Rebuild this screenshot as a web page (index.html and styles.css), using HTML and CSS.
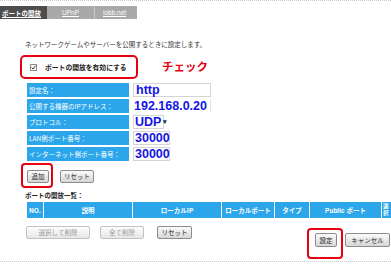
FILE: index.html
```html
<!DOCTYPE html>
<html lang="ja">
<head>
<meta charset="utf-8">
<link rel="stylesheet" href="styles.css">
</head>
<body>
<div class="topline"></div>
<nav class="tabs">
  <a class="tab active">ポートの開放</a>
  <a class="tab upnp">UPnP</a>
  <a class="tab iobb">iobb.net</a>
</nav>
<p class="intro">ネットワークゲームやサーバーを公開するときに設定します。</p>
<div class="enable-row">
  <label class="enable-box"><svg class="cb" width="7" height="7" viewBox="0 0 7 7"><rect x="0.5" y="0.5" width="6" height="6" fill="#fff" stroke="#8a8a8a"/><path d="M1.6 3.5 L3 5 L5.5 1.8" fill="none" stroke="#333" stroke-width="1"/></svg>ポートの開放を有効にする</label>
  <span class="check-note">チェック</span>
</div>
<div class="form">
  <div class="lbl">設定名：</div>
  <div class="val"><span class="input w78">http</span></div>
  <div class="lbl">公開する機器のIPアドレス：</div>
  <div class="val"><span class="input ip">192.168.0.20</span></div>
  <div class="lbl">プロトコル：</div>
  <div class="val"><span class="input sel">UDP<span class="arrow">▾</span></span></div>
  <div class="lbl">LAN側ポート番号：</div>
  <div class="val"><span class="input w37">30000</span></div>
  <div class="lbl">インターネット側ポート番号：</div>
  <div class="val"><span class="input w37">30000</span></div>
</div>
<div class="add-row">
  <div class="hl hl-add"><button class="btn add">追加</button></div>
  <button class="btn reset1">リセット</button>
</div>
<div class="list-title">ポートの開放一覧：</div>
<div class="thead">
  <div class="th c-no">NO.</div>
  <div class="th c-desc">説明</div>
  <div class="th c-ip">ローカルIP</div>
  <div class="th c-lport">ローカルポート</div>
  <div class="th c-type">タイプ</div>
  <div class="th c-pub">Public ポート</div>
  <div class="th c-sel">選<br>択</div>
</div>
<div class="foot">
  <div class="left-btns">
    <button class="btn dis b-delsel">選択して削除</button>
    <button class="btn dis b-delall">全て削除</button>
    <button class="btn b-reset2">リセット</button>
  </div>
  <div class="right-btns">
    <div class="hl hl-set"><button class="btn set">設定</button></div>
    <button class="btn cancel">キャンセル</button>
  </div>
</div>
<div class="bottomline"></div>
</body>
</html>
```

FILE: styles.css
```css
html, body {
  margin: 0;
  padding: 0;
  overflow: hidden;
  background: #fff;
}
body {
  width: 391px;
  height: 268px;
  font-family: "Noto Sans CJK JP", sans-serif;
  font-size: 6.5px;
  color: #333;
}
.topline {
  border-top: 1px dotted #c8c8c8;
}
.tabs {
  display: flex;
  width: 137px;
  height: 13px;
  margin-top: 5px;
  background: #a9a9a9;
}
.tab {
  display: flex;
  align-items: center;
  color: #fff;
  text-decoration: underline;
  font-size: 6.5px;
  box-sizing: border-box;
}
.tab.active {
  background: #4d4d4d;
  width: 47px;
  padding-left: 2px;
  font-weight: bold;
}
.tab.upnp {
  width: 48px;
  padding-left: 15px;
  border-right: 1px solid #c9c9c9;
  font-family: "Liberation Sans", sans-serif;
}
.tab.iobb {
  padding-left: 8px;
  font-family: "Liberation Sans", sans-serif;
}
.intro {
  margin: 20px 0 0;
  padding-left: 25px;
  line-height: 10px;
  color: #333;
}
.enable-row {
  display: flex;
  align-items: center;
  margin-top: 6px;
}
.enable-box {
  margin-left: 20px;
  width: 118px;
  height: 24px;
  box-sizing: border-box;
  border: 2px solid #e60012;
  border-radius: 5px;
  display: flex;
  align-items: center;
  padding-left: 8px;
  font-weight: bold;
  font-size: 6.8px;
  color: #222;
}
.cb {
  margin-right: 8px;
  flex-shrink: 0;
}
.check-note {
  margin-left: 24px;
  color: #e60012;
  font-size: 11.5px;
  font-weight: bold;
  line-height: 1;
}
.form {
  display: grid;
  grid-template-columns: 102px auto;
  column-gap: 4px;
  row-gap: 2px;
  grid-auto-rows: 14px;
  margin-top: 4px;
  padding-left: 27px;
}
.lbl {
  background: #2ba6ea;
  color: #fff;
  display: flex;
  align-items: center;
  padding-left: 2px;
  font-size: 6.5px;
  white-space: nowrap;
}
.val {
  display: flex;
  align-items: center;
  font-family: "Liberation Sans", sans-serif;
  font-size: 12.5px;
  font-weight: bold;
  color: #1414e6;
}
.input {
  display: flex;
  align-items: center;
  height: 14px;
  box-sizing: border-box;
  border: 1px solid #d4d4d4;
  padding-left: 2px;
  line-height: 12px;
}
.w78 { width: 78px; }
.w37 { width: 37px; padding-left: 1px; }
.ip {
  width: 78px;
  padding-left: 0;
  border-color: transparent #e2e2e2 transparent transparent;
}
.sel {
  width: 31px;
  padding-left: 1px;
}
.arrow {
  font-size: 7px;
  color: #333;
  margin-left: 2px;
}
.add-row {
  display: flex;
  align-items: flex-start;
  margin-top: 2px;
  padding-left: 21px;
}
.hl {
  border: 2px solid #e60012;
  border-radius: 4px;
  display: flex;
}
.hl-add {
  padding: 5px 2px 3px 4px;
}
.btn {
  height: 13px;
  padding: 0;
  margin: 0;
  box-sizing: border-box;
  border: 1px solid #8c8c8c;
  border-radius: 2px;
  background: linear-gradient(#fbfbfb, #d6d6d6);
  color: #222;
  font-family: "Noto Sans CJK JP", sans-serif;
  font-size: 6.5px;
  line-height: 11px;
  text-align: center;
}
.btn.add { width: 22px; }
.btn.reset1 {
  width: 34px;
  margin-left: 7px;
  margin-top: 7px;
}
.list-title {
  margin-top: 2px;
  padding-left: 25px;
  line-height: 10px;
  font-weight: bold;
  color: #222;
}
.thead {
  display: flex;
  gap: 1px;
  margin-top: 2px;
  margin-left: 27px;
  height: 16px;
}
.th {
  flex-shrink: 0;
  background: #2ba6ea;
  color: #fff;
  font-weight: bold;
  display: flex;
  align-items: center;
  justify-content: center;
  font-size: 6.5px;
  white-space: nowrap;
}
.c-no { width: 16px; }
.c-desc { width: 88px; }
.c-ip { width: 88px; }
.c-lport { width: 52px; }
.c-type { width: 34px; }
.c-pub { width: 71px; font-family: "Liberation Sans", "Noto Sans CJK JP", sans-serif; }
.c-sel {
  width: 10px;
  font-size: 5.5px;
  line-height: 7px;
  text-align: center;
  justify-content: flex-start;
  padding-left: 1px;
  box-sizing: border-box;
}
.foot {
  display: flex;
  align-items: flex-start;
  margin-top: 8px;
}
.left-btns {
  display: flex;
  padding-left: 26px;
}
.btn.dis {
  color: #9a9a9a;
  border-color: #c2c2c2;
  background: linear-gradient(#fdfdfd, #e6e6e6);
}
.b-delsel { width: 64px; }
.b-delall { width: 44px; margin-left: 10px; }
.b-reset2 { width: 35px; margin-left: 13px; }
.right-btns {
  display: flex;
  align-items: flex-start;
  margin-left: auto;
  margin-right: 1px;
  margin-top: 2px;
}
.hl-set {
  padding: 3px 4px 10px 6px;
}
.btn.set { width: 22px; height: 14px; }
.btn.cancel {
  width: 45px;
  height: 14px;
  margin-left: 2px;
  margin-top: 5px;
}
.bottomline {
  margin-top: 2px;
  border-top: 1px dotted #c8c8c8;
}
```
